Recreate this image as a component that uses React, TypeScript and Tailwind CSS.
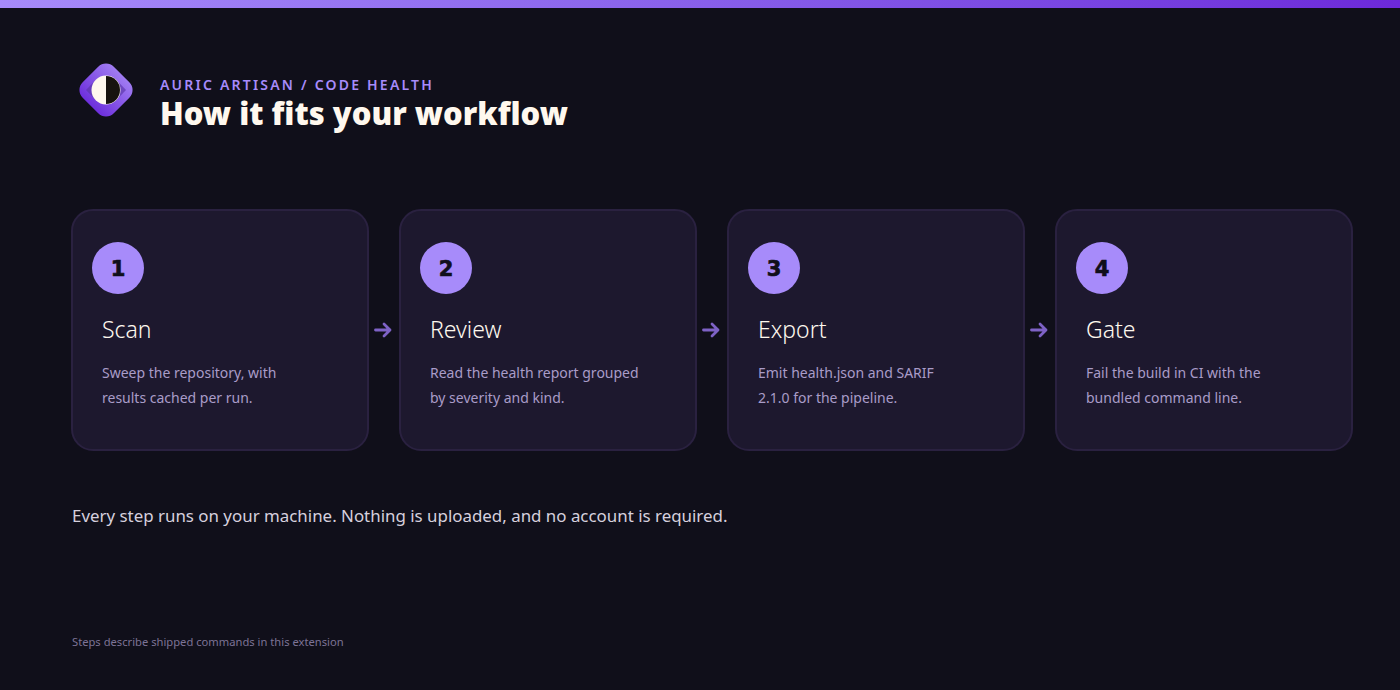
const steps = [
  { n: '1', title: 'Scan', lines: ['Sweep the repository, with', 'results cached per run.'] },
  { n: '2', title: 'Review', lines: ['Read the health report grouped', 'by severity and kind.'] },
  { n: '3', title: 'Export', lines: ['Emit health.json and SARIF', '2.1.0 for the pipeline.'] },
  { n: '4', title: 'Gate', lines: ['Fail the build in CI with the', 'bundled command line.'] },
];

function Logo() {
  return (
    <svg width="56" height="56" viewBox="0 0 56 56" fill="none">
      <defs>
        <linearGradient id="logoFill" x1="0" y1="0" x2="0" y2="1">
          <stop offset="0" stopColor="#a07cf2" />
          <stop offset="1" stopColor="#6d2fdc" />
        </linearGradient>
        <clipPath id="eyeClip">
          <circle cx="28" cy="28" r="14" />
        </clipPath>
      </defs>
      <rect x="6" y="6" width="44" height="44" rx="11" transform="rotate(45 28 28)" fill="url(#logoFill)" />
      <path d="M8 28 L18 17.5 H38 L48 28 L38 38.5 H18 Z" fill="#5a35a8" opacity="0.65" />
      <circle cx="28" cy="28" r="14.5" fill="#fff8ee" />
      <rect x="28" y="13" width="15" height="30" fill="#17130f" clipPath="url(#eyeClip)" />
    </svg>
  );
}

function Arrow() {
  return (
    <svg width="18" height="16" viewBox="0 0 18 16" fill="none" stroke="#7e62c6" strokeWidth="2.8" strokeLinecap="round" strokeLinejoin="round">
      <path d="M1.5 8H16M10 2l6 6-6 6" />
    </svg>
  );
}

export default function App() {
  return (
    <div className="h-[690px] w-[1400px] overflow-hidden bg-[#100f1a] font-['Noto_Sans',sans-serif]">
      <div className="h-2 bg-gradient-to-r from-[#a78bfa] to-[#6d28d9]" />
      <div className="flex h-[682px] flex-col px-[72px] pt-[54px]">
        <header className="flex items-start gap-[26px] pl-[6px]">
          <Logo />
          <div className="mt-[14px]">
            <div className="text-sm leading-[18px] font-semibold tracking-[0.158em] text-[#a78bfa]">AURIC ARTISAN / CODE HEALTH</div>
            <h1 className="text-[31px] leading-[38px] font-black text-[#fff8ee]">How it fits your workflow</h1>
          </div>
        </header>

        <div className="mt-[77px] -ml-px flex">
          {steps.map((s, i) => (
            <div key={s.n} className="flex">
              <div className="h-[242px] w-[298px] rounded-[22px] border-2 border-[#2a2140] bg-[#1d182e] pt-[31px] pl-[19px]">
                <div className="flex h-[52px] w-[52px] items-center justify-center rounded-full bg-[#a78bfa] pt-[3px] font-['DejaVu_Sans',sans-serif] text-[21px] font-bold text-[#100f1a] [-webkit-text-stroke:0.7px_#100f1a]">{s.n}</div>
                <div className="mt-[19px] pl-[10px]">
                  <div className="text-[23px] leading-8 font-light text-[#fff8ee]">{s.title}</div>
                  <div className="mt-[15px] text-sm leading-[25px] text-[#a99cc8]">
                    {s.lines.map((l) => <div key={l}>{l}</div>)}
                  </div>
                </div>
              </div>
              {i < 3 && (
                <div className="flex w-[30px] items-center justify-center pr-[2px]">
                  <Arrow />
                </div>
              )}
            </div>
          ))}
        </div>

        <p className="mt-[53px] text-[16.9px] leading-6 text-[#d6d0de]">Every step runs on your machine. Nothing is uploaded, and no account is required.</p>
        <p className="mt-[106px] text-[11.2px] leading-4 text-[#7d7396]">Steps describe shipped commands in this extension</p>
      </div>
    </div>
  );
}
